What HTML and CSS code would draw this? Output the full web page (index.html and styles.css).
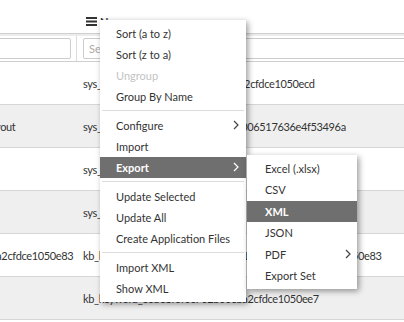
FILE: index.html
```html
<!DOCTYPE html>
<html>
<head>
    <title>List</title>
    <link rel="stylesheet" href="styles.css">
</head>
<body>

<div class="list">
    <div class="list-head">
        <div class="cell c1"></div>
        <div class="cell c2">
            <svg class="hamb" width="11" height="9" viewBox="0 0 11 9"><rect x="0" y="0" width="11" height="2"/><rect x="0" y="3.5" width="11" height="2"/><rect x="0" y="7" width="11" height="2"/></svg>
            <span>Name</span>
        </div>
    </div>
    <div class="list-filter">
        <div class="cell c1"><input class="search" type="text"></div>
        <div class="cell c2"><input class="search" type="text" placeholder="Search"></div>
    </div>
    <div class="row">
        <div class="cell c1"></div>
        <div class="cell c2">sys_keyword_e0be1f6f6c2b0eba7d2cfdce1050ecd</div>
    </div>
    <div class="row odd">
        <div class="cell c1">Service Portal UI Application Layout</div>
        <div class="cell c2">sys_ui_section_3ac09d8f2c7b1e40006517636e4f53496a</div>
    </div>
    <div class="row">
        <div class="cell c1"></div>
        <div class="cell c2">sys_ui_list_1b7c</div>
    </div>
    <div class="row odd">
        <div class="cell c1"></div>
        <div class="cell c2">sys_ui_form_2a8d</div>
    </div>
    <div class="row">
        <div class="cell c1">kb_keyword_e0be1f6f6c2b0eba2cfdce1050e83</div>
        <div class="cell c2">kb_keyword_a1c05e6f6c2b0eba9d1a7e3f5b8c102cfdce1050e83</div>
    </div>
    <div class="row odd">
        <div class="cell c1"></div>
        <div class="cell c2">kb_keyword_e0be1f6f6c702b00eba2cfdce1050ee7</div>
    </div>
</div>

<div class="menu">
    <div class="item">Sort (a to z)</div>
    <div class="item">Sort (z to a)</div>
    <div class="item disabled">Ungroup</div>
    <div class="item">Group By Name</div>
    <div class="sep"></div>
    <div class="item has-sub">Configure
        <svg class="chev" width="6" height="10" viewBox="0 0 6 10"><polyline points="1,1 5,5 1,9"/></svg>
    </div>
    <div class="item">Import</div>
    <div class="item has-sub active">Export
        <svg class="chev" width="6" height="10" viewBox="0 0 6 10"><polyline points="1,1 5,5 1,9"/></svg>
        <div class="menu submenu">
            <div class="item">Excel (.xlsx)</div>
            <div class="item">CSV</div>
            <div class="item active">XML</div>
            <div class="item">JSON</div>
            <div class="item has-sub">PDF
                <svg class="chev" width="6" height="10" viewBox="0 0 6 10"><polyline points="1,1 5,5 1,9"/></svg>
            </div>
            <div class="item">Export Set</div>
        </div>
    </div>
    <div class="sep"></div>
    <div class="item">Update Selected</div>
    <div class="item">Update All</div>
    <div class="item">Create Application Files</div>
    <div class="sep"></div>
    <div class="item">Import XML</div>
    <div class="item">Show XML</div>
</div>

</body>
</html>
```

FILE: styles.css
```css
body {
    font-family: 'Lato', 'Liberation Sans', sans-serif;
    font-size: 11px;
    color: #333;
    background-color: #fff;
    margin: 0;
    padding: 0;
    overflow: hidden;
}

.list {
    margin-left: -151px;
    width: 700px;
}

.list-head,
.list-filter,
.row {
    display: flex;
    align-items: center;
    box-sizing: border-box;
}

.cell {
    flex: none;
    box-sizing: border-box;
    padding: 0 6px;
    white-space: nowrap;
    overflow: hidden;
}

.c1 {
    width: 228px;
}

.c2 {
    width: 472px;
}

.list-head {
    height: 34px;
    border-bottom: 1px solid #cfcfcf;
}

.list-head .c2 {
    display: flex;
    align-items: center;
    gap: 3px;
    padding-left: 9px;
    padding-top: 9px;
    font-weight: bold;
}

.hamb {
    fill: #333;
}

.list-filter {
    height: 28px;
    border-top: 2px solid #ececec;
    border-bottom: 1px solid #cfcfcf;
}

.list-filter .cell {
    height: 100%;
    display: flex;
    align-items: center;
}

.list-filter .c1 {
    border-right: 1px solid #dcdcdc;
    padding-right: 5px;
}

.search {
    width: 100%;
    height: 21px;
    box-sizing: border-box;
    border: 1px solid #cccccc;
    border-radius: 2px;
    font-family: inherit;
    font-size: 11px;
    padding: 0 5px;
    color: #333;
}

.search::placeholder {
    color: #aaa;
}

.row {
    height: 43px;
    border-bottom: 1px solid #d6d6d6;
}

.row .cell {
    letter-spacing: -0.35px;
}

.row.odd {
    background-color: #efefef;
}

.menu {
    position: absolute;
    left: 100px;
    top: 20px;
    width: 146px;
    box-sizing: border-box;
    background-color: #fff;
    padding: 3px 0;
    box-shadow: 2px 2px 6px rgba(0, 0, 0, 0.4);
}

.item {
    position: relative;
    height: 21px;
    line-height: 21px;
    padding-left: 16px;
    white-space: nowrap;
}

.item.disabled {
    color: #c4c4c4;
}

.item.active {
    background-color: #6f6f6f;
    color: #fff;
    font-weight: bold;
}

.chev {
    position: absolute;
    right: 7px;
    top: 5px;
    fill: none;
    stroke: #444;
    stroke-width: 1.2;
}

.item.active > .chev {
    stroke: #fff;
}

.sep {
    height: 1px;
    margin: 3px 2px 4px;
    background-color: #dcdcdc;
}

.submenu {
    left: 147px;
    top: -2px;
    width: 110px;
    font-weight: normal;
    color: #333;
}

.submenu .item {
    height: 21.4px;
    line-height: 21.4px;
    padding-left: 18px;
}

.submenu .chev {
    right: 6px;
}
```
